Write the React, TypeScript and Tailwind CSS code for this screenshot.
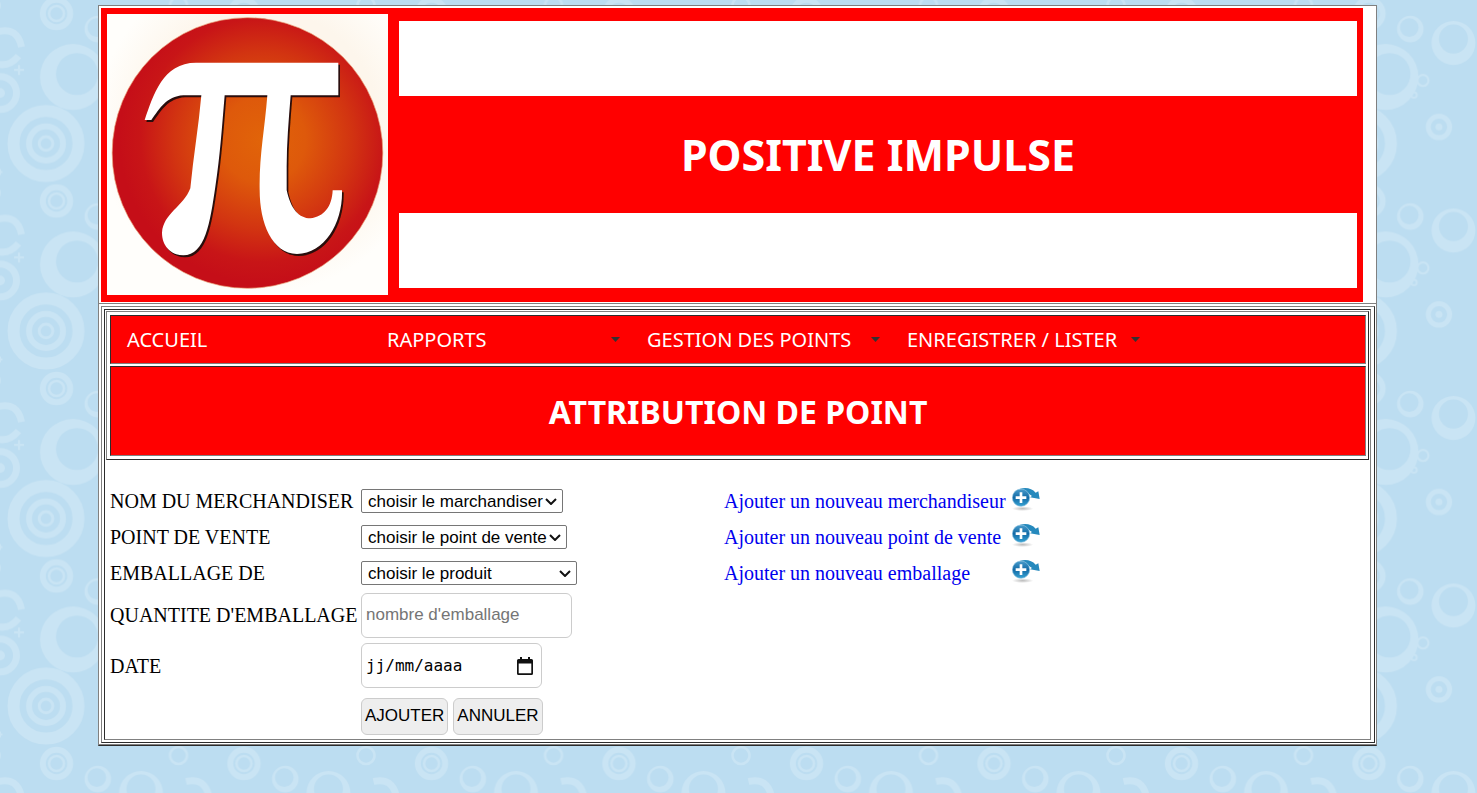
import React from "react";

function Bubbles() {
  return (
    <g id="bubbles" fill="none" stroke="#c9e4f4">
      <circle cx="46" cy="143.5" r="32.5" strokeWidth="12" />
      <circle cx="46" cy="143.5" r="17" strokeWidth="6" />
      <circle cx="46" cy="143.5" r="6.8" strokeWidth="3" />
      <circle cx="56.5" cy="13.5" r="13.7" strokeWidth="6" />
      <circle cx="56.5" cy="13.5" r="7.5" strokeWidth="2.6" />
      <g stroke="none" fill="#c9e4f4" fillRule="evenodd">
        <path d="M40 77a33 33 0 1 0 66 0a33 33 0 1 0-66 0M56 74a21 21 0 1 0 42 0a21 21 0 1 0-42 0" />
        <path d="M84.5 29a13.3 13.3 0 1 0 26.6 0a13.3 13.3 0 1 0-26.6 0M87.5 27.5a9.3 9.3 0 1 0 18.6 0a9.3 9.3 0 1 0-18.6 0" />
        <path d="M119 43a22 22 0 1 0 44 0a22 22 0 1 0-44 0M126.500 39a14.500 14.500 0 1 0 29 0a14.500 14.500 0 1 0-29 0" />
        <path d="M176 43q-5 7-3 11q3 3 6 0q2-4-3-11" />
        <circle cx="126.500" cy="127" r="3.5" />
        <circle cx="187.500" cy="93" r="5" />
      </g>
      <circle cx="126.500" cy="127" r="10.7" strokeWidth="5" />
      <circle cx="187.500" cy="93" r="16.500" strokeWidth="7" />
      <circle cx="110.500" cy="80.500" r="5.500" strokeWidth="2.200" />
      <circle cx="101.500" cy="95" r="2.800" strokeWidth="2" />
      <circle cx="178.500" cy="5.500" r="8.500" strokeWidth="2.600" />
      <path strokeWidth="7" d="M186 31.500Q205 27 209 47M206 56Q198 66 187 64.500" />
      <path strokeWidth="2.200" d="M201.500 70h10M206.500 65v10" />
      <path strokeWidth="2" d="M185 172h5M187.500 169v6" />
    </g>
  );
}

function Backdrop() {
  return (
    <svg className="fixed inset-0 -z-10 h-full w-full" aria-hidden="true">
      <defs>
        <pattern id="tile" width="187.5" height="187.5" patternUnits="userSpaceOnUse">
          <rect width="188" height="188" fill="#bcddf1" />
          <Bubbles />
          <use href="#bubbles" x="-187.5" />
          <use href="#bubbles" y="-187.5" />
          <use href="#bubbles" y="187.5" />
        </pattern>
      </defs>
      <rect width="100%" height="100%" fill="url(#tile)" />
    </svg>
  );
}

const PI =
  "M146 360C172 285 200 188 300 188H727V286H584C578 360 572 430 572 500V570C584 628 610 655 643 655C684 651 708 620 710 571H738C741 665 688 762 603 762C528 760 491 670 491 570C489 470 506 390 514 286H386C378 380 372 470 358 560C342 668 328 765 262 766C222 765 198 735 198 698C202 640 262 620 283 565C292 470 308 380 316 286H262C210 290 192 325 166 360Z";

function Logo() {
  return (
    <svg className="size-[281px] shrink-0" viewBox="33 42 843 843" role="img" aria-label="Positive Impulse">
      <defs>
        <radialGradient id="disc" gradientUnits="userSpaceOnUse" cx="500" cy="420" r="430">
          <stop offset="0" stopColor="#e16409" />
          <stop offset="0.3" stopColor="#de590b" />
          <stop offset="0.62" stopColor="#d23411" />
          <stop offset="0.85" stopColor="#c81517" />
          <stop offset="1" stopColor="#c50e18" />
        </radialGradient>
        <radialGradient id="glow" gradientUnits="userSpaceOnUse" cx="500" cy="380" r="500">
          <stop offset="0.7" stopColor="#fdf6ec" />
          <stop offset="1" stopColor="#fffefb" />
        </radialGradient>
        <filter id="soft">
          <feGaussianBlur stdDeviation="2" />
        </filter>
      </defs>
      <rect x="33" y="42" width="843" height="843" fill="url(#glow)" />
      <circle cx="454.500" cy="459" r="406" fill="url(#disc)" stroke="#e9a279" strokeWidth="2" />
      <path d={PI} transform="translate(5 6)" fill="#2c1008" filter="url(#soft)" />
      <path d={PI} fill="#fff" />
    </svg>
  );
}

function AddIcon({ n }: { n: number }) {
  return (
    <svg className="h-6 w-7" viewBox="0 0 84 72" aria-hidden="true">
      <defs>
        <linearGradient id={`blue${n}`} x1="0" y1="0" x2="0" y2="1">
          <stop offset="0" stopColor="#4a9dcc" />
          <stop offset="0.5" stopColor="#126aa6" />
          <stop offset="1" stopColor="#37a3d3" />
        </linearGradient>
        <radialGradient id={`shade${n}`}>
          <stop offset="0" stopColor="#bbb" />
          <stop offset="1" stopColor="#fff" />
        </radialGradient>
      </defs>
      <ellipse cx="32" cy="62" rx="32" ry="7" fill={`url(#shade${n})`} />
      <path d="M24 2Q54-5 71 14L79 10L83 33L54 28L60 24Q48 14 24 2" fill="#2589bd" />
      <circle cx="27" cy="29" r="26" fill={`url(#blue${n})`} stroke="#8ec3df" strokeWidth="2" />
      <path d="M27 13V45M11 29H43" stroke="#fff" strokeWidth="8" />
    </svg>
  );
}

const menu = [
  { label: "ACCUEIL", sub: false },
  { label: "RAPPORTS", sub: true },
  { label: "GESTION DES POINTS", sub: true },
  { label: "ENREGISTRER / LISTER", sub: true },
];

const rows = [
  { id: "merchandiser", label: "NOM DU MERCHANDISER", option: "choisir le marchandiser", width: "w-[202px]", link: "Ajouter un nouveau merchandiseur" },
  { id: "pdv", label: "POINT DE VENTE", option: "choisir le point de vente", width: "w-[206px]", link: "Ajouter un nouveau point de vente" },
  { id: "produit", label: "EMBALLAGE DE", option: "choisir le produit", width: "w-[216px]", link: "Ajouter un nouveau emballage" },
];

const field = "rounded-md border border-[#ccc] bg-white px-1 h-[45px]";
const button = "h-[37px] rounded-md border border-[#ccc] bg-[#eee] px-[3px]";
const sunken = "border border-t-[#2c2c2c] border-l-[#2c2c2c] border-r-[#808080] border-b-[#808080]";
const raised = "border border-t-[#808080] border-l-[#808080] border-r-[#2c2c2c] border-b-[#2c2c2c]";

export default function App() {
  return (
    <div className="pt-[5px] pr-[100px] pb-12 pl-[98px] font-['Liberation_Serif',serif] text-[20px] text-black">
      <Backdrop />
      <div className="border border-[#808080] border-b-[#2c2c2c] bg-white">
        <header className="border-b border-[#808080] pt-0.5 pr-[13px] pb-px pl-0.5">
          <div className="flex gap-[11px] bg-[#ff0000] p-1.5 pb-[7px]">
            <Logo />
            <div className="my-[7px] flex flex-1 flex-col bg-white py-[75px]">
              <h1 className="flex flex-1 items-center justify-center bg-[#ff0000] font-['Noto_Sans',sans-serif] text-[43px] leading-none font-bold text-white">
                POSITIVE IMPULSE
              </h1>
            </div>
          </div>
        </header>
        <div className="border-b border-[#808080] pt-0.5 pr-px pb-px pl-0.5">
          <div className={`${raised} pt-0.5 pr-[3px] pb-0.5 pl-0.5`}>
            <main className={`${sunken} pt-px pr-px pl-px`}>
              <div className={`${raised} flex flex-col gap-0.5 p-[3px] pr-0.5 font-['Noto_Sans',sans-serif]`}>
                <nav className={`${sunken} flex h-[49px] bg-[#ff0000] text-white`}>
                  {menu.map((m) => (
                    <a key={m.label} href="#" className="flex w-[260px] items-center justify-between pr-[11px] pl-4 whitespace-nowrap">
                      {m.label}
                      {m.sub && (
                        <svg className="h-[5px] w-[9px]" viewBox="0 0 9 5" aria-hidden="true">
                          <path d="M0 0H9L4.500 5Z" fill="#333" />
                        </svg>
                      )}
                    </a>
                  ))}
                </nav>
                <h2 className={`${sunken} flex h-[90px] items-center justify-center bg-[#ff0000] pt-0.5 text-[32px] leading-none font-bold text-white`}>
                  ATTRIBUTION DE POINT
                </h2>
              </div>
              <form className="mt-6 grid grid-cols-[247px_359px_284px_auto] grid-rows-[34px_34px_34px_46px_51px_46px] items-center gap-x-1 gap-y-0.5 pl-1 whitespace-nowrap">
                {rows.map((r, i) => (
                  <React.Fragment key={r.id}>
                    <label htmlFor={r.id}>{r.label}</label>
                    <div className={`${r.width} relative`}>
                      <select id={r.id} className="block h-6 w-full appearance-none rounded-xs border border-[#767676] bg-white pl-1.5 font-['Liberation_Sans',sans-serif] text-[17px] leading-none">
                        <option>{r.option}</option>
                      </select>
                      <svg className="pointer-events-none absolute top-[9px] right-1.5 h-[7px] w-3" viewBox="0 0 12 7" aria-hidden="true">
                        <path d="M1 1L6 6L11 1" fill="none" stroke="#111" strokeWidth="2" />
                      </svg>
                    </div>
                    <a href="#" className="text-[#0000ee]">{r.link}</a>
                    <a href="#" aria-label={r.link} className="self-start pt-1">
                      <AddIcon n={i} />
                    </a>
                  </React.Fragment>
                ))}
                <label htmlFor="qte">QUANTITE D'EMBALLAGE</label>
                <input id="qte" placeholder="nombre d'emballage" className={`${field} col-span-3 w-[211px] font-['Liberation_Sans',sans-serif] text-[17px] placeholder:text-[#757575]`} />
                <label htmlFor="date">DATE</label>
                <div className={`${field} col-span-3 flex w-[181px] items-center justify-between`}>
                  <input id="date" placeholder="jj/mm/aaaa" className="w-[120px] font-['DejaVu_Sans_Mono',monospace] text-[16px] placeholder:text-black" />
                  <button type="button" aria-label="Calendrier" className="mr-1">
                    <svg className="h-[18px] w-4" viewBox="0 0 16 18" aria-hidden="true">
                      <path d="M3 0H5V2H11V0H13V2H14.500Q16 2 16 3.500V16.500Q16 18 14.500 18H1.500Q0 18 0 16.500V3.500Q0 2 1.500 2H3ZM1.700 6.500V16.300H14.300V6.500Z" fill="#111" fillRule="evenodd" />
                    </svg>
                  </button>
                </div>
                <div className="col-span-3 col-start-2 flex gap-[5px] font-['Liberation_Sans',sans-serif] text-[17px]">
                  <button type="submit" className={button}>AJOUTER</button>
                  <button type="reset" className={button}>ANNULER</button>
                </div>
              </form>
            </main>
          </div>
        </div>
      </div>
    </div>
  );
}
